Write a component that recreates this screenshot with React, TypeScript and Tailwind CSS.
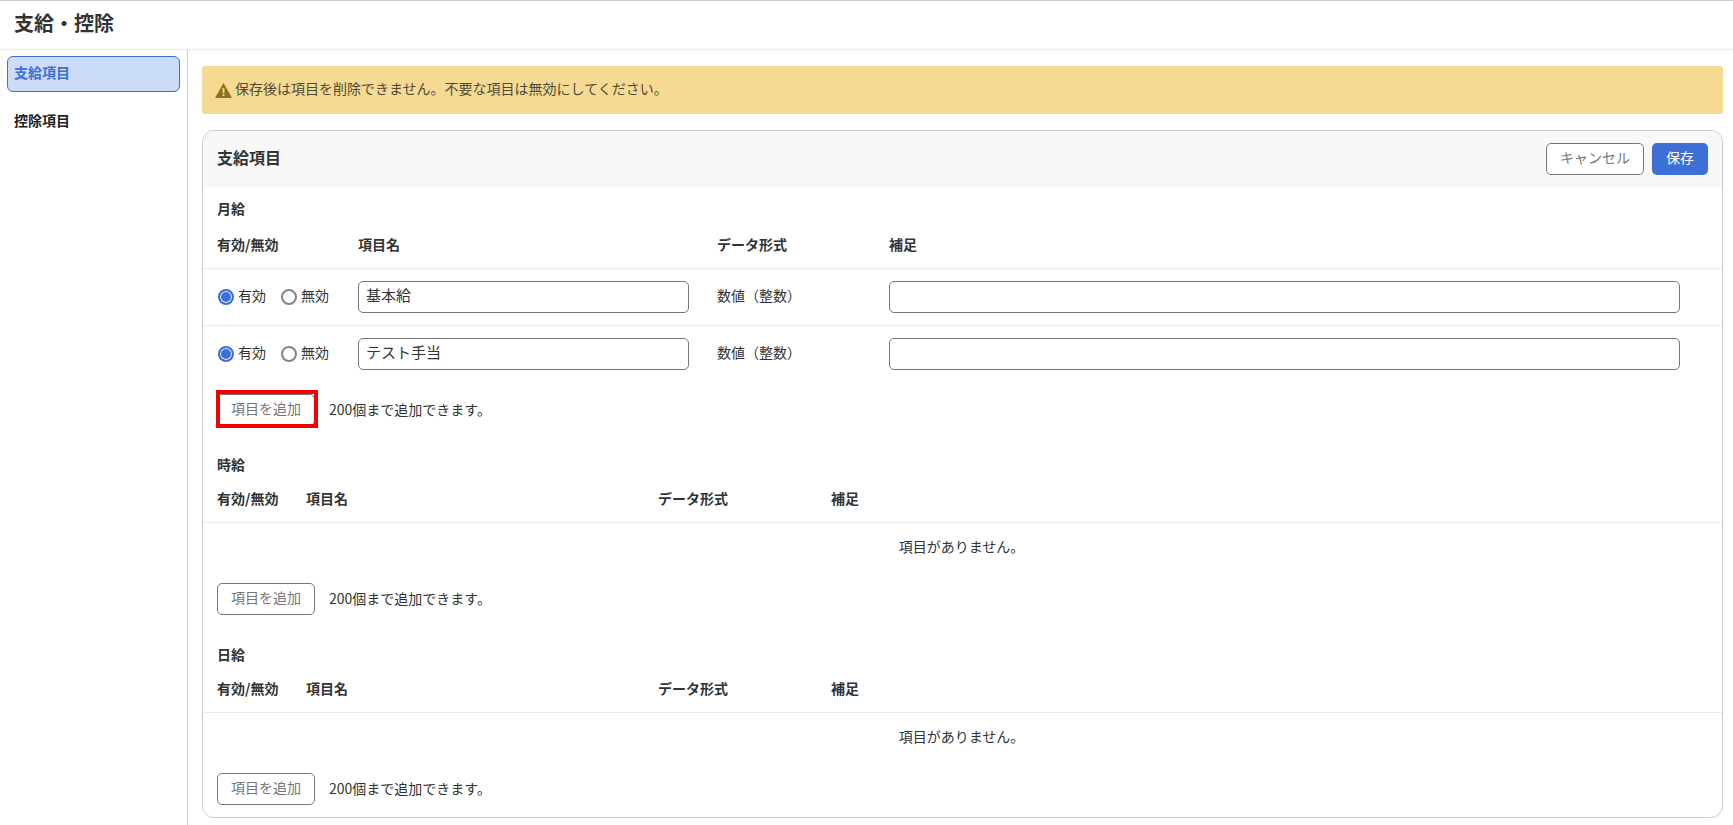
import React from "react";

const font = "font-['Noto_Sans_CJK_JP','Noto_Sans',sans-serif]";

function Radio({ checked, label }: { checked?: boolean; label: string }) {
  return (
    <label className="flex items-center gap-[4px]">
      <input
        type="radio"
        readOnly
        checked={!!checked}
        className="m-0 h-[16px] w-[16px] appearance-none rounded-full border-2 border-[#858585] bg-white checked:border-[#3d70d6] checked:bg-[#3d70d6] checked:shadow-[inset_0_0_0_1px_#fff]"
      />
      <span className="pb-[4px]">{label}</span>
    </label>
  );
}

function AddRow({ highlight }: { highlight?: boolean }) {
  return (
    <div className="flex items-center">
      <button className="relative h-[32px] w-[98px] rounded-[5px] border border-[#767676] bg-white pb-[5px] text-[14px] leading-[20px] text-[#767676]">
        項目を追加
        {/* red marker drawn over the screenshot */}
        {highlight && (
          <span className="absolute -bottom-[3px] -left-[2px] -right-[4px] -top-[5px] border-[4px] border-[#f00200]" />
        )}
      </button>
      <span className="ml-[14px] pb-[2px] text-[14px] leading-[20px] text-[#333]">200個まで追加できます。</span>
    </div>
  );
}

function FilledHead() {
  return (
    <div className="grid h-[48px] grid-cols-[141px_359px_172px_1fr] px-[14px] pt-[14px] text-[14px] font-bold leading-[20px] text-[#333]">
      <span>有効/無効</span>
      <span>項目名</span>
      <span>データ形式</span>
      <span>補足</span>
    </div>
  );
}

function Row({ name }: { name: string }) {
  return (
    <div className="grid h-[57px] grid-cols-[141px_359px_172px_1fr] items-center border-t border-[#ebebeb] px-[14px] text-[14px] leading-[20px] text-[#333]">
      <div className="flex gap-[15px] pl-[1px]">
        <Radio checked label="有効" />
        <Radio label="無効" />
      </div>
      <div className="pr-[28px]">
        <input
          readOnly
          value={name}
          className="h-[32px] w-full rounded-[5px] border border-[#767676] px-[7px] pb-[5px] text-[15px] text-[#333]"
        />
      </div>
      <span className="pb-[5px]">数値（整数）</span>
      <div className="pr-[28px]">
        <input readOnly className="h-[32px] w-full rounded-[5px] border border-[#767676]" />
      </div>
    </div>
  );
}

function EmptySection({ title, last }: { title: string; last?: boolean }) {
  return (
    <section className={last ? "mt-[29px]" : "mt-[28px]"}>
      <div className="px-[14px] pb-[2px] text-[14px] font-bold leading-[20px] text-[#333]">{title}</div>
      <div className="grid h-[46px] grid-cols-[89px_352px_173px_1fr] px-[14px] pt-[12px] text-[14px] font-bold leading-[20px] text-[#333]">
        <span>有効/無効</span>
        <span>項目名</span>
        <span>データ形式</span>
        <span>補足</span>
      </div>
      <div className="flex h-[61px] items-start justify-center border-t border-[#ebebeb] pr-[2px] pt-[13px] text-[14px] leading-[20px] text-[#333]">
        項目がありません。
      </div>
      <div className="px-[14px]">
        <AddRow />
      </div>
    </section>
  );
}

export default function App() {
  return (
    <div className={"flex h-[825px] flex-col overflow-hidden border-t border-[#ccc] bg-white " + font}>
      <header className="flex h-[49px] items-center border-b border-[#ebebeb] px-[14px] pb-[4px] text-[20px] font-bold text-[#333]">
        支給・控除
      </header>
      <div className="flex flex-1">
        <nav className="w-[188px] border-r border-[#ccc] px-[7px] pt-[6px] text-[14px] font-bold leading-[20px]">
          <div className="h-[36px] rounded-[6px] border border-[#3d70d6] bg-[#cbdcf7] px-[6px] pt-[5px] text-[#3d70d6]">
            支給項目
          </div>
          <div className="mt-[13px] px-[7px] pb-[7px] pt-[5px] text-[#222]">控除項目</div>
        </nav>
        <main className="flex-1 pl-[14px] pr-[10px] pt-[16px]">
          <div className="flex h-[48px] items-center gap-[3px] rounded-[3px] bg-[#f6da93] px-[13px] text-[14px] text-[#4f4a35]">
            <svg width="17" height="15" viewBox="0 0 17 15" className="shrink-0">
              <path d="M8.5 0 L17 15 L0 15 Z" fill="#8f7318" />
              <rect x="7.6" y="5" width="1.8" height="5.2" fill="#f6da93" />
              <rect x="7.6" y="11.2" width="1.8" height="1.8" fill="#f6da93" />
            </svg>
            <span className="pb-[3px]">保存後は項目を削除できません。不要な項目は無効にしてください。</span>
          </div>
          <div className="mt-[16px] h-[688px] rounded-[12px] border border-[#ccc]">
            <div className="flex h-[56px] items-center justify-between rounded-t-[12px] bg-[#f8f8f8] px-[14px]">
              <h2 className="pb-[5px] text-[16px] font-bold text-[#333]">支給項目</h2>
              <div className="flex gap-[8px]">
                <button className="h-[32px] w-[98px] rounded-[5px] border border-[#767676] bg-white pb-[4px] text-[14px] text-[#767676]">
                  キャンセル
                </button>
                <button className="h-[32px] w-[56px] rounded-[5px] bg-[#3d70d6] pb-[4px] text-[14px] text-white">保存</button>
              </div>
            </div>
            <section>
              <div className="px-[14px] pb-[2px] pt-[11px] text-[14px] font-bold leading-[20px] text-[#333]">月給</div>
              <FilledHead />
              <Row name="基本給" />
              <Row name="テスト手当" />
              <div className="px-[14px] pt-[12px]">
                <AddRow highlight />
              </div>
            </section>
            <EmptySection title="時給" />
            <EmptySection title="日給" last />
          </div>
        </main>
      </div>
    </div>
  );
}
